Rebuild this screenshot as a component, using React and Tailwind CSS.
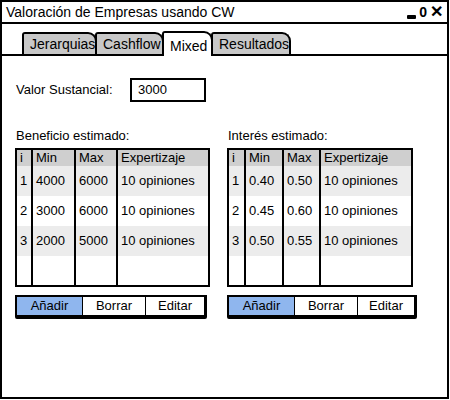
import React from "react";

const font = { fontFamily: '"Liberation Sans", Arial, sans-serif' };

function Tab({ label, selected, w }) {
  return (
    <div
      className={
        "relative border-t-2 border-l-2 border-r-2 border-black rounded-tl-[3px] rounded-tr-[9px] flex items-center pl-[6px] text-[14px] -mr-[2px] " +
        (selected ? "bg-white h-[25px] -mb-[2px] z-10 pt-[4px]" : "bg-[#c8c8c8] h-[22px]")
      }
      style={{ width: w }}
    >
      {label}
    </div>
  );
}

function DataTable({ cols, rows }) {
  const gridCols = cols;
  return (
    <div className="border-2 border-black h-[139px] flex flex-col bg-white">
      <div className={"grid h-[16px] bg-[#cfcfcf] text-[13px] leading-[16px] " + gridCols}>
        {["i", "Min", "Max", "Expertizaje"].map((h, i) => (
          <div key={i} className={"pl-[3px] " + (i < 3 ? "border-r-2 border-black" : "")}>{h}</div>
        ))}
      </div>
      {rows.map((r, ri) => (
        <div key={ri} className={"grid h-[30px] text-[13px] " + gridCols + (ri % 2 === 0 ? " bg-[#ececec]" : " bg-white")}>
          {r.map((c, i) => (
            <div key={i} className={"flex items-center pl-[3px] " + (i < 3 ? "border-r-2 border-black" : "")}>{c}</div>
          ))}
        </div>
      ))}
      <div className={"grid flex-1 " + gridCols}>
        {[0, 1, 2, 3].map((i) => (
          <div key={i} className={i < 3 ? "border-r-2 border-black" : ""}></div>
        ))}
      </div>
    </div>
  );
}

function ButtonGroup({ widths }) {
  const labels = ["Añadir", "Borrar", "Editar"];
  return (
    <div className="flex border-t-2 border-l-2 border-r-[3px] border-b-[4px] border-black h-[24px] rounded-br-[2px] rounded-bl-[2px] text-[13px] w-fit">
      {labels.map((l, i) => (
        <div
          key={i}
          className={
            "flex items-center justify-center " +
            (i === 0 ? "bg-[#8fb6ee] " : "bg-white ") +
            (i < 2 ? "border-r border-black" : "")
          }
          style={{ width: widths[i] }}
        >
          {l}
        </div>
      ))}
    </div>
  );
}

export default function App() {
  const left = [
    ["1", "4000", "6000", "10 opiniones"],
    ["2", "3000", "6000", "10 opiniones"],
    ["3", "2000", "5000", "10 opiniones"],
  ];
  const right = [
    ["1", "0.40", "0.50", "10 opiniones"],
    ["2", "0.45", "0.60", "10 opiniones"],
    ["3", "0.50", "0.55", "10 opiniones"],
  ];
  return (
    <div className="w-[450px] h-[400px] bg-white text-black" style={font}>
      <div className="w-[449px] h-[399px] border-2 border-black flex flex-col">
        <div className="h-[22px] border-b-2 border-black flex items-center justify-between pl-[4px] pr-[4px]">
          <span className="text-[14px]">Valoración de Empresas usando CW</span>
          <div className="flex items-center gap-[3px] font-bold">
            <div className="w-[9px] h-[4px] bg-black mt-[9px] rounded-[1px]"></div>
            <span className="leading-none text-[14px]">0</span>
            <span className="leading-none text-[16px]">✕</span>
          </div>
        </div>
        <div className="h-[30px] flex items-end pl-[20px]">
          <Tab label="Jerarquias" w={75} />
          <Tab label="Cashflow" w={69} />
          <Tab label="Mixed" selected w={51} />
          <Tab label="Resultados" w={80} />
        </div>
        <div className="flex-1 border-t-2 border-black pl-[13px] pt-[22px]">
          <div className="flex items-center h-[24px]">
            <span className="text-[13px] w-[115px] pl-[1px]">Valor Sustancial:</span>
            <div className="w-[76px] h-[24px] border-2 border-black flex items-center pl-[6px] text-[13px]">3000</div>
          </div>
          <div className="flex gap-[17px] mt-[26px]">
            <div className="w-[195px]">
              <div className="text-[13px] h-[16px] leading-[16px] pl-[1px] mb-[4px]">Beneficio estimado:</div>
              <DataTable cols="grid-cols-[16px_43px_42px_1fr]" rows={left} />
              <div className="mt-[8px]">
                <ButtonGroup widths={[66, 63, 58]} />
              </div>
            </div>
            <div className="w-[186px]">
              <div className="text-[13px] h-[16px] leading-[16px] pl-[1px] mb-[4px]">Interés estimado:</div>
              <DataTable cols="grid-cols-[17px_38px_37px_1fr]" rows={right} />
              <div className="mt-[8px]">
                <ButtonGroup widths={[66, 63, 56]} />
              </div>
            </div>
          </div>
        </div>
      </div>
    </div>
  );
}
